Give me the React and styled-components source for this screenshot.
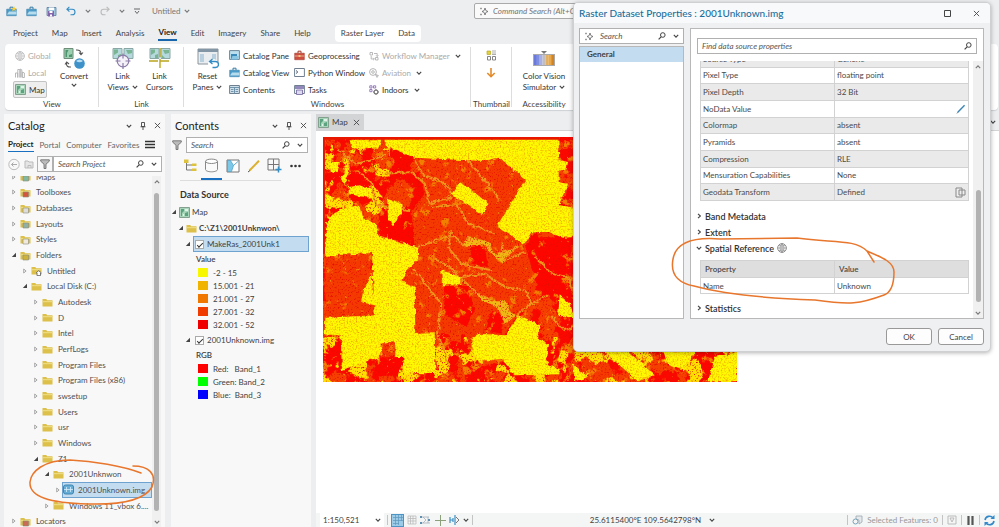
import React from "react";
import styled, { createGlobalStyle, css } from "styled-components";

const Global = createGlobalStyle`
  *, *::before, *::after { box-sizing: border-box; }
  body { margin: 0; background: #eceef0; }
  body, button, input, select, table {
    font-family: Lato, "Open Sans", sans-serif;
    font-size: 8px;
    color: #3f3f3f;
  }
  button, input, select { margin: 0; padding: 0; border: 0; background: none; }
  ul { list-style: none; margin: 0; padding: 0; }
  svg { display: block; flex: none; }
  h2, h3, p { margin: 0; font-weight: 400; }
`;

/* ---------- shell ---------- */
const Shell = styled.div`
  position: relative;
  display: flex;
  flex-direction: column;
  height: 100vh;
  overflow: hidden;
  background: #eceef0;
  white-space: nowrap;
`;
const TitleBar = styled.header`
  display: flex;
  align-items: center;
  height: 22px;
  padding-left: 6px;
`;
const QuickTools = styled.div`
  display: flex;
  align-items: center;
  gap: 9px;
  width: 146px;
`;
const IconButton = styled.button`
  display: flex;
  align-items: center;
  justify-content: center;
`;
const ProjectName = styled.button`
  display: flex;
  align-items: center;
  gap: 3px;
  width: 38px;
  color: #777;
`;
const CommandBox = styled.label`
  display: flex;
  align-items: center;
  gap: 5px;
  width: 190px;
  height: 16px;
  margin-left: 284px;
  padding: 0 4px;
  border: 1px solid #aaa;
  border-radius: 2px;
  background: #fafafa;
  input { flex: 1; min-width: 0; font-style: italic; }
`;
const TabBar = styled.nav`
  display: flex;
  align-items: center;
  gap: 14px;
  height: 22px;
  padding-left: 13px;
`;
const RibbonTab = styled.button`
  height: 16px;
  line-height: 12px;
  color: #444;
  ${(p) => p.$active && css`
    color: #222;
    font-weight: 700;
    border-bottom: 2px solid #1766ad;
  `}
`;
const ContextTabs = styled.div`
  display: flex;
  gap: 14px;
  height: 17px;
  padding: 0 6px;
  margin-left: 10px;
  border-radius: 4px;
  background: #fff;
`;
const Ribbon = styled.section`
  display: grid;
  grid-template-columns: 94px 85px 287px 41px 64px 1fr;
  height: 66px;
  margin: 0 1px 0 5px;
  border-radius: 4px;
  background: #fff;
  box-shadow: 0 1px 1px #cfd1d3;
`;
const RibbonGroup = styled.div`
  display: flex;
  flex-direction: column;
  justify-content: space-between;
  padding: 3px 0 0;
  ${(p) => p.$rule && css`
    background: linear-gradient(#ddd, #ddd) right 3px / 1px 60px no-repeat;
  `}
`;
const GroupBody = styled.div`
  display: flex;
  justify-content: ${(p) => p.$align || "flex-start"};
  gap: ${(p) => p.$gap || 0}px;
  padding-left: ${(p) => p.$pad || 0}px;
`;
const GroupName = styled.div`
  height: 12px;
  line-height: 12px;
  text-align: center;
`;
const Stack = styled.div`
  display: flex;
  flex-direction: column;
  width: ${(p) => p.$w}px;
`;
const SmallButton = styled.button`
  display: flex;
  align-items: center;
  gap: 3px;
  height: 17px;
  padding: 0 2px;
  text-align: left;
  color: ${(p) => (p.$off ? "#aaa" : "#333")};
  ${(p) => p.$on && css`
    outline: 1px solid #c3c3c3;
    outline-offset: -1px;
    border-radius: 2px;
    background: #eee;
  `}
`;
const BigButton = styled.button`
  display: flex;
  flex-direction: column;
  align-items: center;
  width: ${(p) => p.$w || 37}px;
  line-height: 11px;
  color: #333;
  svg { margin-bottom: 1px; }
  span { display: flex; align-items: center; gap: 3px; }
`;

/* ---------- docked panes ---------- */
const Workspace = styled.main`
  display: flex;
  flex: 1;
  min-height: 0;
  padding: 4px 0 0 4px;
  gap: 6px;
`;
const Pane = styled.section`
  display: flex;
  flex-direction: column;
  width: ${(p) => p.$w}px;
  min-height: 0;
  background: #f8f8f8;
  overflow: hidden;
`;
const PaneHead = styled.header`
  display: flex;
  align-items: center;
  gap: 8px;
  height: 23px;
  padding: 0 4px;
  h2 { flex: 1; font-size: 11px; color: #222; }
`;
const PaneTabs = styled.nav`
  display: flex;
  align-items: center;
  gap: 6px;
  height: 15px;
  padding: 0 4px;
`;
const PaneTab = styled.button`
  height: 15px;
  line-height: 12px;
  color: #666;
  ${(p) => p.$active && css`
    color: #222;
    font-weight: 700;
    border-bottom: 1px solid #1a70c0;
  `}
`;
const SearchRow = styled.div`
  display: flex;
  align-items: center;
  gap: ${(p) => p.$gap}px;
  padding: ${(p) => p.$pad};
`;
const SearchField = styled.label`
  display: flex;
  align-items: center;
  gap: 7px;
  flex: 1;
  min-width: 0;
  height: 16px;
  padding: 0 4px;
  border: 1px solid #b0b0b0;
  background: #fff;
  input { flex: 1; min-width: 0; width: 0; font-style: italic; outline: 0; }
  input::placeholder { color: #555; opacity: 1; }
`;
const FilterButton = styled.button`
  display: flex;
  align-items: center;
  justify-content: center;
  width: 16px;
  height: 16px;
  border: ${(p) => (p.$framed ? "1px solid #b0b0b0" : "0")};
`;
const TreeArea = styled.div`
  display: flex;
  flex: 1;
  min-height: 0;
  overflow: hidden;
`;
const Tree = styled.ul`
  display: grid;
  grid-auto-rows: 1fr;
  flex: 1;
  min-width: 0;
  height: calc(100% + 9px);
  margin-top: -7px;
`;
const TreeRow = styled.li`
  display: flex;
  align-items: center;
  gap: 1px;
  min-height: 0;
  padding-left: ${(p) => 7 + p.$depth * 11}px;
  color: #4f4f4f;
`;
const TreeLabel = styled.span`
  display: flex;
  align-items: center;
  gap: 5px;
  height: 16px;
  padding-left: 2px;
  ${(p) => p.$sel && css`
    flex: 1;
    gap: 4px;
    padding-left: 1px;
    outline: 1px solid #6ea3cf;
    outline-offset: -1px;
    background: #c3dcf0;
  `}
`;
const ScrollTrack = styled.div`
  display: flex;
  flex-direction: column;
  align-items: center;
  gap: 8px;
  width: ${(p) => p.$w}px;
  margin-right: ${(p) => p.$mr || 0}px;
  padding: 3px 0 2px;
  background: #f0f0f0;
`;
const ScrollThumb = styled.div`
  width: 5px;
  border-radius: 3px;
  background: #b2b2b2;
  ${(p) => (p.$len ? css`height: ${p.$len}px; margin-top: auto;` : css`flex: 1;`)}
`;
const ModeBar = styled.div`
  display: flex;
  margin: 0 30px 0 9px;
  border-bottom: 1px solid #ddd;
`;
const ModeButton = styled.button`
  display: flex;
  align-items: center;
  justify-content: center;
  flex: none;
  width: 21px;
  height: 27px;
  border-bottom: 2px solid ${(p) => (p.$active ? "#1a70c0" : "transparent")};
`;
const LayerTitle = styled.h3`
  padding: 7px 0 3px 9px;
  line-height: 13px;
  font-size: 9px;
  font-weight: 700;
  color: #333;
`;
const LayerRow = styled.div`
  display: flex;
  align-items: center;
  gap: 2px;
  height: 16px;
  margin-right: 2px;
  margin-top: ${(p) => (p.$spaced ? 1 : 0)}px;
  padding-left: ${(p) => p.$pad}px;
  font-weight: ${(p) => (p.$bold ? 700 : 400)};
`;
const LayerBox = styled.label`
  display: flex;
  align-items: center;
  gap: 3px;
  height: 16px;
  flex: 1;
  padding-left: 2px;
  ${(p) => p.$sel && css`
    outline: 1px solid #6ea3cf;
    outline-offset: -1px;
    background: #c3dcf0;
  `}
  input {
    appearance: none;
    width: 9px;
    height: 9px;
    border: 1px solid #aaa;
    background: #fff;
    display: grid;
    place-items: center;
  }
  input:checked::after {
    content: "";
    width: 6px;
    height: 3px;
    border: solid #333;
    border-width: 0 0 1px 1px;
    transform: rotate(-45deg);
  }
`;
const LegendTitle = styled.div`
  height: 14px;
  line-height: 14px;
  padding-left: 25px;
  font-weight: 600;
`;
const Legend = styled.ul`
  display: grid;
  grid-auto-rows: 13px;
  padding-left: 27px;
`;
const LegendItem = styled.li`
  display: flex;
  align-items: center;
  gap: 5px;
  white-space: pre;
  &::before {
    content: "";
    width: 10px;
    height: 9px;
    background: ${(p) => p.$color};
  }
`;

/* ---------- map ---------- */
const MapPane = styled.section`
  display: flex;
  flex-direction: column;
  flex: 1;
  min-width: 0;
  margin-left: -1px;
`;
const MapTabs = styled.div`
  display: flex;
  align-items: center;
  justify-content: space-between;
  height: 16px;
  padding-right: 3px;
`;
const MapTab = styled.button`
  display: flex;
  align-items: center;
  gap: 3px;
  height: 16px;
  padding: 0 4px 0 2px;
  background: #d2d4d6;
`;
const MapCanvas = styled.div`
  flex: 1;
  min-height: 0;
  padding: 6px 0 0 7px;
  border-top: 1px solid #d2d4d6;
  background: #fff;
  overflow: hidden;
`;
const StatusBar = styled.footer`
  display: flex;
  align-items: center;
  height: 14px;
  padding: 0 4px;
  background: #f4f5f5;
`;
const ScaleSelect = styled.select`
  appearance: none;
  width: 64px;
  height: 14px;
  padding-left: 3px;
  background: #fff;
`;
const StatusGroup = styled.div`
  display: flex;
  align-items: center;
  gap: ${(p) => p.$gap}px;
  margin-left: ${(p) => p.$ml || 0}px;
  color: ${(p) => (p.$dim ? "#999" : "#555")};
`;
const Coordinates = styled.div`
  display: flex;
  align-items: center;
  justify-content: flex-end;
  gap: 8px;
  flex: 1;
  padding-right: 132px;
  margin-right: auto;
`;
const ChevronOver = styled.span`
  margin-left: -9px;
  pointer-events: none;
`;
const Rule = styled.i`
  width: 1px;
  height: 10px;
  background: #c4c4c4;
`;
const Highlight = styled.button`
  display: grid;
  place-items: center;
  width: 13px;
  height: 13px;
  border: 1px solid #4c94c6;
  background: #9ccbe8;
`;

/* ---------- dialog ---------- */
const Dialog = styled.section`
  position: absolute;
  top: 2px;
  right: 8px;
  width: 418px;
  border: 1px solid #cfd0d1;
  border-radius: 5px;
  background: #eff0f2;
  box-shadow: 0 1px 4px rgba(0, 0, 0, 0.3);
  overflow: hidden;
`;
const DialogHead = styled.header`
  display: flex;
  align-items: center;
  gap: 22px;
  height: 20px;
  padding: 0 10px 0 5px;
  background: #f8f9fa;
  h2 { flex: 1; font-size: 10px; color: #176f9e; font-weight: 500; }
`;
const DialogBody = styled.div`
  display: grid;
  grid-template-columns: 105px 1fr;
  gap: 6px;
  height: 291px;
  margin: 5px 6px 0 5px;
`;
const Sidebar = styled.div`
  display: flex;
  flex-direction: column;
  gap: 2px;
`;
const DialogSearch = styled(SearchField)`
  flex: none;
`;
const PageList = styled.ul`
  flex: 1;
  border: 1px solid #b8b8b8;
  background: #fff;
`;
const PageItem = styled.li`
  height: 15px;
  line-height: 15px;
  padding-left: 7px;
  background: #c3dcf0;
  font-weight: 700;
`;
const Properties = styled.div`
  display: flex;
  flex-direction: column;
  min-width: 0;
  border: 1px solid #b8b8b8;
  background: #fff;
`;
const FindField = styled(SearchField)`
  flex: none;
  margin: 9px 6px 0;
`;
const PropertyScroll = styled.div`
  display: flex;
  justify-content: space-between;
  flex: 1;
  min-height: 0;
  margin-top: 7px;
  overflow: hidden;
`;
const PropertyList = styled.div`
  flex: 1;
  margin: -11px 4px 0 9px;
`;
const PropTable = styled.table`
  width: 100%;
  height: ${(p) => p.$h}px;
  margin-top: ${(p) => p.$mt || 0}px;
  border-collapse: collapse;
  table-layout: fixed;
  border: 1px solid #ccc;
  th, td {
    width: 50%;
    padding: 0 2px;
    border: 1px solid #d2d2d2;
    text-align: left;
    font-weight: 400;
    line-height: 10px;
    color: #4a4a4a;
  }
  thead th { height: 17px; padding: 0 4px; background: #dedede; font-weight: 600; }
  tr[data-shade="true"] > * { background: #eaeaea; }
`;
const Cell = styled.div`
  display: flex;
  align-items: center;
  justify-content: space-between;
  height: 12px;
`;
const Section = styled.button`
  display: flex;
  align-items: center;
  gap: 3px;
  height: 16px;
  margin-left: -4px;
  margin-top: ${(p) => p.$mt || 0}px;
  font-size: 9px;
  font-weight: 600;
  color: #333;
`;
const DialogFoot = styled.footer`
  display: flex;
  justify-content: flex-end;
  gap: 6px;
  padding: 9px 6px 6px;
`;
const DialogButton = styled.button`
  width: 46px;
  height: 17px;
  border: 1px solid #999;
  border-radius: 3px;
  background: #fdfdfd;
`;
const Ink = styled.svg`
  position: absolute;
  left: ${(p) => p.$x}px;
  top: ${(p) => p.$y}px;
  pointer-events: none;
  fill: none;
  stroke: #e8762c;
  stroke-linecap: round;
  stroke-linejoin: round;
`;

/* ---------- icons ---------- */
const Svg = ({ w = 10, h, box, children }) => (
  <svg width={w} height={h || w} viewBox={box || `0 0 ${w} ${h || w}`} fill="none" aria-hidden="true">
    {children}
  </svg>
);
const Chevron = ({ c = "#444", dir = "down", w = 6 }) => (
  <Svg w={w} box="0 0 6 6">
    <path
      d={{ down: "M.8 1.8 3 4.2 5.2 1.8", up: "M.8 4.2 3 1.8 5.2 4.2", right: "M2 .8 4.4 3 2 5.2" }[dir]}
      stroke={c}
      strokeWidth="1.1"
    />
  </Svg>
);
const Close = ({ w = 7, c = "#444" }) => (
  <Svg w={w} box="0 0 8 8"><path d="M1 1l6 6M7 1 1 7" stroke={c} strokeWidth="1" /></Svg>
);
const Pin = () => (
  <Svg w={6} h={8}><path d="M1.5.5h3v4h-3zM.5 4.8h5M3 5v3" stroke="#444" strokeWidth=".9" /></Svg>
);
const Lens = ({ w = 8 }) => (
  <Svg w={w} box="0 0 8 8"><circle cx="4.8" cy="3" r="2.3" stroke="#444" /><path d="M3.1 4.8.6 7.4" stroke="#444" strokeWidth="1.2" /></Svg>
);
const Spark = () => (
  <Svg w={9}><path d="M6 1l.9 2.6L9 4.5l-2.1.9L6 8l-.9-2.6L3 4.5l2.1-.9z" stroke="#666" strokeWidth=".8" /><path d="M1 1.5h2M2 .5v2M1 7.5h2M2 6.5v2" stroke="#888" strokeWidth=".7" /></Svg>
);
const Case = ({ star, red, w = 11 }) => (
  <Svg w={w} box="0 0 11 11">
    <path d="M4 3V1.2h3V3" stroke={red ? "#a33b2c" : "#3a7ba3"} />
    <path d="M.7 3.2h9.6v6.5H.7z" fill={red ? "#cf4d3d" : "#4b9cc9"} stroke={red ? "#a33b2c" : "#3a82ae"} strokeWidth=".6" />
    <path d={red ? "M.7 6h9.6" : "M1 8.5 3 5.5h7.5v3z"} fill="#b7dced" stroke={red ? "#f1c6b7" : "none"} strokeWidth=".8" />
    {red && <path d="M4.6 5h1.8v2H4.6z" fill="#f1d16b" />}
    {star && <path d="M8 0l.8 1.9 2 .1-1.5 1.2.5 2L8 4.1 6.2 5.2l.5-2L5.2 2l2-.1z" fill="#f3cf3f" />}
  </Svg>
);
const Save = () => (
  <Svg w={11}><path d="M1 1.5h9v8H1z" fill="#9ec5de" stroke="#5b7e9c" strokeWidth=".8" /><path d="M3 1.5h5V4H3z" fill="#fff" /><path d="M2 5h6v5.5H2z" fill="#8065ac" /><path d="M3.5 5h3v2h-3zM4 8.5h2v2H4z" fill="#fff" /></Svg>
);
const Undo = ({ c, flip }) => (
  <Svg w={10}>
    <g transform={flip ? "matrix(-1 0 0 1 10 0)" : undefined}>
      <path d="M1 3.2h5.2a2.6 2.6 0 010 5.6H4.5M3.4.8.9 3.2l2.5 2.5" stroke={c} strokeWidth="1.1" />
    </g>
  </Svg>
);
const MapIcon = ({ w = 11 }) => (
  <Svg w={w} box="0 0 11 11">
    <path d="M.5.5h10v10H.5z" fill="#a9d6bb" stroke="#84a08f" />
    <path d="M2 2h3v2L3 6v3H2zM6 6l3-1v4H6z" fill="#5ba37f" /><path d="M6 2h3v2H6zM4 7h1v2H4z" fill="#e2f2ea" />
  </Svg>
);
const Globe = ({ c = "#b5b5b5", w = 10 }) => (
  <Svg w={w} box="0 0 10 10"><circle cx="5" cy="5" r="4.4" stroke={c} fill="#f3f3f3" strokeWidth=".8" /><path d="M5 .6v8.8M.6 5h8.8M2 2.3Q5 4 8 2.3M2 7.7Q5 6 8 7.7M5 .6q-4 4.4 0 8.8M5 .6q4 4.4 0 8.8" stroke={c} strokeWidth=".5" /></Svg>
);
const City = () => (
  <Svg w={10}><path d="M.5 9.5V5h2.2v4.5M2.8 9.5v-8h2v8M5.3 9.5V1l1.5.8v7.7M7.4 9.5V4l2 1v4.5z" stroke="#b0b0b0" strokeWidth=".9" /></Svg>
);
const Convert = () => (
  <Svg w={22} h={23}>
    <path d="M1 1.5h9v10H1z" fill="#9ccfb0" stroke="#6f8d7b" /><path d="M2.5 3h3L4 6v4H2.5zM6 8l3-1v3H6z" fill="#4d9571" />
    <path d="M13 3q5-.5 5 4m-2-1.5 2 2.2 2-2.2M8 20q-5 .5-4.5-4M2 17.5 3.7 15l2.3 2" stroke="#555" strokeWidth="1.1" />
    <circle cx="16.5" cy="16.5" r="5.3" fill="#3f92c9" /><path d="M13 14q3.5-3 7 0-3.5 2.5-7 0z" fill="#b9def2" />
  </Svg>
);
const LinkIcon = ({ cursors }) => (
  <Svg w={22} h={23}>
    <path d="M1 1.5h9v10H1zM12 1.5h9v10h-9z" fill="#b5d9dd" stroke="#8aa7a5" />
    <path d="M2 2.5h4v3L2 8zM6 8l3-1v4H6zM14 3h6v3l-4 1zM13 8l3 3h-3z" fill="#79b592" />
    {cursors ? (
      <path d="M0 14h22M11 1v21" stroke="#bba51e" strokeWidth="1.4" strokeDasharray="9 2" />
    ) : (
      <g><circle cx="11" cy="14" r="5.8" stroke="#8a7ba8" strokeWidth="1.2" fill="#f4f1f8" /><path d="M11 6.5v5M11 16v6M3.5 14h5M13.5 14h5" stroke="#8a7ba8" strokeWidth="1.2" /></g>
    )}
  </Svg>
);
const ResetIcon = () => (
  <Svg w={22} h={23}>
    <path d="M1 2h20v15H1z" fill="#e9edf0" stroke="#8a949c" /><path d="M1 2h20v3H1z" fill="#8296a5" />
    <path d="M3 7h4v8H3zM15 7h4v8h-4z" fill="#b8cfdf" /><circle cx="16" cy="17" r="5" fill="#fff" />
    <path d="M13.5 14.5h5a3 3 0 010 6h-3M15.5 12l-3 2.5 3 2.5" stroke="#318bc4" strokeWidth="1.3" />
  </Svg>
);
const WindowIcon = ({ kind }) => (
  <Svg w={11}>
    <path d="M.6 1.5h9.8v8H.6z" fill={kind === "panel" ? "#cfe1ec" : "#fff"} stroke="#6f7f90" />
    {kind === "panel" && <path d="M1 3.5h9M5.5 3.5v6M2 5.5h2.5M2 7.5h2.5M6.5 5.5H9M6.5 7.5H9" stroke="#688ca5" strokeWidth=".9" />}
    {kind === "term" && <path d="M2 3.5 3.8 5 2 6.5" stroke="#4c5d70" />}
    {kind === "task" && <g><path d="M1 2h9v3H1z" fill="#9288bb" /><path d="M2.5 6h6v4.5h-6z" fill="#ded9ee" stroke="#6d639c" strokeWidth=".8" /></g>}
  </Svg>
);
const CatalogPaneIcon = () => (
  <Svg w={11}><path d="M.6.6h9.8v8.8H.6z" fill="#bcdff0" stroke="#6c8798" /><path d="M2 4h6v5.5H2z" fill="#3989bb" /><path d="M3.5 6H10L8.5 9.5H2z" fill="#8bc6e3" /></Svg>
);
const Flow = ({ c = "#aaa" }) => (
  <Svg w={10}><path d="M1 1.5h2.5V4H1zM6.5 6.5H9V9H6.5zM5 2.5h3.2v3M2.2 5v3h3M7 4.3l1.2 1.2 1.2-1.2M4.2 6.8 5.4 8 4.2 9.2" stroke={c} strokeWidth=".8" /></Svg>
);
const Plane = () => (
  <Svg w={10}><circle cx="4" cy="4" r="3.4" stroke="#b5b5b5" /><circle cx="4" cy="4" r="1.3" stroke="#b5b5b5" /><path d="M6 6l3.5 1.5L8 9.5z" fill="#ccc" stroke="#aaa" strokeWidth=".6" /></Svg>
);
const Indoors = () => (
  <Svg w={10}><path d="M.8.8H3V3H.8zM4.500.8h2.200V3H4.500zM.8 4.500H3v2.200H.8z" stroke="#8c73b3" strokeWidth=".9" /><circle cx="7" cy="7" r="1.900" stroke="#777" strokeWidth="1.200" /><path d="M7 4v1M7 9v1M4 7h1M9 7h1" stroke="#777" /></Svg>
);
const Thumbs = () => (
  <Svg w={11}><path d="M1 1h3.5v3.5H1z" fill="#e2d23f" stroke="#b9a823" strokeWidth=".7" /><path d="M6 1h4M6 3h4M6 4.5h4" stroke="#999" strokeWidth=".8" /><path d="M1.5 6.5h3V10h-3zM6.5 6.5h3V10h-3z" stroke="#777" strokeWidth=".9" /></Svg>
);
const ArrowDown = () => (
  <Svg w={10} h={11}><path d="M5 1v8.5M1.3 6 5 9.7 8.7 6" stroke="#e38b2b" strokeWidth="1.6" /></Svg>
);
const ColorBars = () => (
  <Svg w={22} h={23}>
    <path d="M8 4h6l-3 3z" fill="#777" />
    <rect x=".5" y="7.5" width="21" height="11" stroke="#aaa" fill="#fff" />
    {["#6979dc", "#7f8fe0", "#a5b1e5", "#c3bdbb", "#e2b064", "#eaa84c", "#d28324"].map((c, i) => (
      <rect key={c} x={1 + i * 2.86} y="8" width="2.9" height="10" fill={c} />
    ))}
  </Svg>
);
const Funnel = ({ w = 10 }) => (
  <Svg w={w} box="0 0 10 10"><path d="M.7.8h8.6v1.4L6 5.2v4.3H4V5.2L.7 2.2z" fill="#bbb" stroke="#666" strokeWidth=".8" /></Svg>
);
const Twist = ({ open }) => (
  <Svg w={6}>
    {open ? <path d="M5 .8V5H.8z" fill="#444" /> : <path d="M1.7 1v4l2.4-2z" stroke="#888" strokeWidth=".7" />}
  </Svg>
);
const Folder = ({ badge }) => (
  <Svg w={11} h={11}>
    <path d="M.5 2h3.7l1 1.2h5.3v6.3H.5z" fill="#dcc04a" /><path d="M.5 4.2h10v1H.5z" fill="#f1e08a" />
    {badge && badge !== "home" && <path d="M3 5h5.5v5H3z" fill={badge} stroke="#8a8a7a" strokeWidth=".6" />}
    {badge === "home" && <path d="M5 8l2.7-2.3L10.4 8M6 8v2.6h3.5V8" fill="#fff" stroke="#666" strokeWidth=".9" />}
  </Svg>
);
const RasterIcon = () => (
  <Svg w={11}><rect x=".5" y="1" width="10" height="9" rx="2" fill="#67aed6" stroke="#3e86b0" /><path d="M3.5 3v5M7.5 3v5M1 5.5h9" stroke="#d7eefa" strokeWidth=".8" /></Svg>
);
const Lines = () => (
  <Svg w={10} h={9}><path d="M0 1.5h10M0 4.5h10M0 7.5h10" stroke="#333" strokeWidth="1.5" /></Svg>
);
const ListIcon = () => (
  <Svg w={15}><path d="M1 1.5h4.5V5H1zM9 5.5h4.5V8H9zM9 10.5h4.5V13H9z" fill="#ddc23e" /><path d="M3.5 5v7H9M3.5 7H9" stroke="#777" /></Svg>
);
const Cylinder = () => (
  <Svg w={15}><path d="M1.5 3.3v8.2c0 1.3 2.7 2.3 6 2.3s6-1 6-2.3V3.3" fill="#fafafa" stroke="#888" /><ellipse cx="7.5" cy="3.3" rx="6" ry="2.2" fill="#fff" stroke="#888" /></Svg>
);
const SelectIcon = () => (
  <Svg w={14}><path d="M1 1h12v12H1z" fill="#fff" stroke="#777" /><path d="M1.5 1.5h3l3 5-2 6h-4z" fill="#7cc8e8" stroke="#4d9cc0" strokeWidth=".7" /><path d="M7.500 6.500 12.500 2" stroke="#4d9cc0" strokeWidth=".9" /></Svg>
);
const Pencil = ({ w = 14, c = "#dbb02f" }) => (
  <Svg w={w} box="0 0 14 14"><path d="M2.5 11.5 12 1.8" stroke={c} strokeWidth="2" /><path d="M1 13l2-1.5" stroke="#555" /></Svg>
);
const GridPlus = () => (
  <Svg w={15}><path d="M1 1h11v11H1zM6.5 1v11M1 6.5h11" stroke="#777" /><path d="M11.5 8.5v6M8.5 11.5h6" stroke="#348fc5" strokeWidth="1.5" /></Svg>
);
const Dots = () => (
  <Svg w={11} h={4}><circle cx="1.5" cy="2" r="1.3" fill="#333" /><circle cx="5.5" cy="2" r="1.3" fill="#333" /><circle cx="9.5" cy="2" r="1.3" fill="#333" /></Svg>
);

/* ---------- classified raster ---------- */
const tint = (r, g, b, k, c) => `0 0 0 0 ${r} 0 0 0 0 ${g} 0 0 0 0 ${b} ${k} 0 0 0 ${c}`;
const Noise = ({ id, freq, oct = 3, seed, type = "fractalNoise", matrix }) => (
  <filter id={id} x="0" y="0" width="100%" height="100%" colorInterpolationFilters="sRGB">
    <feTurbulence type={type} baseFrequency={freq} numOctaves={oct} seed={seed} />
    <feColorMatrix type="matrix" values={matrix} />
    <feComposite in2="SourceGraphic" operator="in" />
  </filter>
);
const FIELDS = [
  "M200 25 720 20 725 90 750 95 745 118 722 125 722 155 750 160 722 225 768 232V320L735 322 690 305 640 305 620 340 535 290 622 147 540 82 500 92 290 82 200 45z",
  "M24 280 50 248 100 225 128 230 135 262 180 285 180 315 300 352 300 390 265 420 250 450 290 470 292 608 350 606 352 728 258 728 256 680 232 680 232 636 188 636 186 680 110 705 72 720 68 615 20 612 22 562 170 555 162 368 22 376z",
  "M425 155 515 220 490 252 400 192z",
  "M208 205 250 218 252 250 225 285 210 265z",
  "M92 170 125 165 162 180 155 202 92 192z",
  "M370 420 430 440 430 465 372 465z",
  "M600 555 665 585 660 625 690 640 682 700 725 720 720 732 590 735 555 690 480 690 460 640 480 610 565 615z",
  "M725 495 755 520 768 560 720 560z",
  "M160 430 170 525 130 515 135 480z",
  "M30 95 65 95 60 125 35 120z",
  "M85 105 95 130 80 160 68 150z",
  "M95 30 190 30 180 55 100 50z",
  "M20 190 50 200 28 225z",
  "M860 663 930 663 1010 735 960 753 900 700z",
  "M1040 663 1130 663 1100 720 1050 700z",
  "M1190 680 1257 665V753H1170z",
  "M765 700 810 740 770 753z",
];
const EMBERS = [
  "M290 82 540 82 622 147 535 290 620 340 650 370 640 420 655 480 600 550 560 610 292 612 290 470 250 450 265 420 300 390 290 330 270 260 320 190z",
  "M22 376 162 368 130 515 170 525 170 555 22 562z",
  "M188 636 232 636 232 682 188 682z",
  "M440 610 520 600 500 660 460 680z",
  "M780 663 860 670 900 753 800 753z",
];
const DEEP = [
  "M82 108 180 120 165 180 90 165z",
  "M378 467 450 467 470 540 445 590 378 550z",
  "M640 320 760 322 765 500 700 500 650 450 625 350z",
  "M20 615 68 615 72 700 20 750z",
  "M170 682 256 680 256 730 170 740z",
  "M380 640 430 640 430 680 385 690z",
  "M180 225 280 240 290 350 185 310z",
  "M1130 663 1190 663 1200 720 1120 740z",
  "M520 540 560 560 550 610 500 600z",
  "M450 330 500 350 510 410 460 400z",
];
const VEINS = [
  "M60 55 110 100 160 90 210 70",
  "M120 120 160 160 175 225 280 240",
  "M200 130 280 125 320 160 335 220 400 200",
  "M340 230 420 225 450 280 530 310",
  "M300 350 360 325 410 320 440 350 450 320 510 335 530 375 600 350",
  "M285 415 330 470 370 520 360 610 390 700",
  "M350 385 400 415 430 445 480 490 520 510 545 540 590 560 640 520 690 495",
  "M550 340 560 390 620 365",
  "M440 30 450 90 500 150 545 210",
  "M650 380 700 430 750 440 765 480",
  "M700 560 740 600 768 590",
  "M290 90 310 130 380 160 400 190",
  "M430 440 500 430 560 470 620 480 650 530",
  "M400 300 390 350 430 400 520 420",
];
const Raster = () => (
  <svg width="414" height="245" viewBox="15 20 1242 735" role="img" aria-label="Classified raster layer">
    <defs>
      <filter id="ragged" x="-2%" y="-2%" width="104%" height="104%" colorInterpolationFilters="sRGB">
        <feTurbulence type="fractalNoise" baseFrequency=".06" numOctaves="3" seed="8" />
        <feDisplacementMap in="SourceGraphic" scale="14" xChannelSelector="R" yChannelSelector="G" />
      </filter>
      <Noise id="patch" freq=".018" oct={5} seed={4} matrix={tint(0.96, 0.25, 0, 22, -10.6)} />
      <Noise id="amber" freq=".03" oct={5} seed={21} matrix={tint(0.95, 0.5, 0, 9, -5.6)} />
      <Noise id="vein" freq=".012" oct={4} seed={13} type="turbulence" matrix={tint(0.93, 0.52, 0.04, -26, 1.9)} />
      <Noise id="grain" freq=".2" oct={2} seed={2} matrix={tint(0.9, 0.05, 0, 4, -2.2)} />
      <Noise id="gold" freq=".22" oct={2} seed={31} matrix={tint(0.93, 0.62, 0, 2.4, -1.1)} />
      <Noise id="sun" freq=".02" oct={6} seed={17} matrix={tint(1, 0.88, 0, 16, -8.9)} />
    </defs>
    <path d="M15 20h1242v735H15z" fill="#fb0800" />
    <path d="M15 20h1242v735H15z" fill="#000" filter="url(#patch)" />
    <g filter="url(#ragged)">
      <path d={EMBERS.join("")} fill="#f43a00" />
      <path d={DEEP.join("")} fill="#fd0600" />
    </g>
    <path d="M15 20h1242v735H15z" fill="#000" filter="url(#amber)" />
    <path d="M15 20h1242v735H15z" fill="#000" filter="url(#vein)" />
    <path d="M15 620h1242v135H15zM15 20h200v250H15z" fill="#000" filter="url(#sun)" />
    <g filter="url(#ragged)">
      <path d={VEINS.join("")} stroke="#ee951c" strokeWidth="6" fill="none" />
      <path d="M440 350 450 320 510 335 530 375 600 350 550 395 520 370 500 345zM475 490 520 510 560 510 590 560 560 580 540 530 490 510z" fill="#f0b814" />
    </g>
    <path d="M15 20h1242v735H15z" fill="#000" filter="url(#grain)" />
    <path d={FIELDS.join("")} fill="#fffa00" filter="url(#ragged)" />
    <path d={FIELDS.join("")} fill="#000" filter="url(#gold)" />
    <path d="M15 20h710v8H15zM15 20h6v350h-6z" fill="#e81800" />
  </svg>
);

/* ---------- data ---------- */
const TREE = [
  [0, "Maps", false, "#7fb8a0"], [0, "Toolboxes", false, "#d4553f"], [0, "Databases", false, "#ddd"],
  [0, "Layouts", false, "#8fb1a5"], [0, "Styles", false, "#f0e9e0"], [0, "Folders", true, "#cdb23c"],
  [1, "Untitled", false, "home"], [1, "Local Disk (C:)", true], [2, "Autodesk"], [2, "D"], [2, "Intel"],
  [2, "PerfLogs"], [2, "Program Files"], [2, "Program Files (x86)"], [2, "swsetup"], [2, "Users"],
  [2, "usr"], [2, "Windows"], [2, "Z1", true], [3, "2001Unknwon", true], [4, "2001Unknown.img", false, "raster"],
  [3, "Windows 11_vbox 6...."], [0, "Locators", false, "#c96b55"],
];
const CLASSES = [["#f7f700", "-2 - 15"], ["#f0b400", "15.001 - 21"], ["#f07800", "21.001 - 27"], ["#f03c00", "27.001 - 32"], ["#f00000", "32.001 - 52"]];
const BANDS = [["#ff0000", "Red:   Band_1"], ["#00ff00", "Green: Band_2"], ["#0000ff", "Blue:  Band_3"]];
const PROPS = [
  ["Source Type", "Generic"], ["Pixel Type", "floating point"], ["Pixel Depth", "32 Bit"], ["NoData Value", ""],
  ["Colormap", "absent"], ["Pyramids", "absent"], ["Compression", "RLE"], ["Mensuration Capabilities", "None"],
  ["Geodata Transform", "Defined"],
];

const PaneTools = () => (
  <>
    <IconButton aria-label="Options"><Chevron /></IconButton>
    <IconButton aria-label="Auto hide"><Pin /></IconButton>
    <IconButton aria-label="Close"><Close /></IconButton>
  </>
);

function RibbonBar() {
  return (
    <Ribbon>
      <RibbonGroup $rule>
        <GroupBody $pad={8} $gap={7}>
          <Stack $w={34}>
            <SmallButton $off><Globe />Global</SmallButton>
            <SmallButton $off><City />Local</SmallButton>
            <SmallButton $on><MapIcon />Map</SmallButton>
          </Stack>
          <BigButton $w={40}><Convert />Convert<Chevron /></BigButton>
        </GroupBody>
        <GroupName>View</GroupName>
      </RibbonGroup>
      <RibbonGroup $rule>
        <GroupBody $pad={5}>
          <BigButton><LinkIcon />Link<span>Views <Chevron /></span></BigButton>
          <BigButton><LinkIcon cursors />Link<span>Cursors</span></BigButton>
        </GroupBody>
        <GroupName>Link</GroupName>
      </RibbonGroup>
      <RibbonGroup $rule>
        <GroupBody $pad={4}>
          <BigButton $w={39}><ResetIcon />Reset<span>Panes <Chevron /></span></BigButton>
          <Stack $w={65}>
            <SmallButton><CatalogPaneIcon />Catalog Pane</SmallButton>
            <SmallButton><Case />Catalog View</SmallButton>
            <SmallButton><WindowIcon kind="panel" />Contents</SmallButton>
          </Stack>
          <Stack $w={75}>
            <SmallButton><Case red />Geoprocessing</SmallButton>
            <SmallButton><WindowIcon kind="term" />Python Window</SmallButton>
            <SmallButton><WindowIcon kind="task" />Tasks</SmallButton>
          </Stack>
          <Stack $w={96}>
            <SmallButton $off><Flow />Workflow Manager&nbsp; <Chevron /></SmallButton>
            <SmallButton $off><Plane />Aviation&nbsp; <Chevron /></SmallButton>
            <SmallButton><Indoors />Indoors&nbsp; <Chevron /></SmallButton>
          </Stack>
        </GroupBody>
        <GroupName>Windows</GroupName>
      </RibbonGroup>
      <RibbonGroup $rule>
        <GroupBody $align="center">
          <Stack $w={15}>
            <SmallButton aria-label="Update thumbnail"><Thumbs /></SmallButton>
            <SmallButton aria-label="Import thumbnail"><ArrowDown /></SmallButton>
          </Stack>
        </GroupBody>
        <GroupName>Thumbnail</GroupName>
      </RibbonGroup>
      <RibbonGroup>
        <GroupBody $align="center">
          <BigButton $w={60}><ColorBars />Color Vision<span>Simulator <Chevron /></span></BigButton>
        </GroupBody>
        <GroupName>Accessibility</GroupName>
      </RibbonGroup>
    </Ribbon>
  );
}

function CatalogPane() {
  return (
    <Pane $w={161}>
      <PaneHead><h2>Catalog</h2><PaneTools /></PaneHead>
      <PaneTabs>
        <PaneTab $active>Project</PaneTab><PaneTab>Portal</PaneTab><PaneTab>Computer</PaneTab><PaneTab>Favorites</PaneTab>
        <IconButton aria-label="Menu"><Lines /></IconButton>
      </PaneTabs>
      <SearchRow $gap={0} $pad="4px 3px 4px 4px">
        <IconButton aria-label="Back">
          <Svg w={13}><circle cx="6" cy="6.5" r="5.2" stroke="#bbb" /><path d="M9 6.5H3.5M5.5 4.5l-2 2 2 2" stroke="#aaa" /></Svg>
        </IconButton>
        <FilterButton aria-label="Up"><Svg w={10}><path d="M1 9V2h3l1 1h4v6zM4 9V6.5h3V9" stroke="#bbb" fill="#e5e5e5" /></Svg></FilterButton>
        <FilterButton $framed aria-label="Filter"><Funnel /></FilterButton>
        <SearchField><input placeholder="Search Project" aria-label="Search Project" /><Lens /><Chevron /></SearchField>
      </SearchRow>
      <TreeArea>
        <Tree>
          {TREE.map(([depth, name, open, badge]) => (
            <TreeRow key={name} $depth={depth}>
              <Twist open={open} />
              <TreeLabel $sel={badge === "raster"}>
                {badge === "raster" ? <RasterIcon /> : <Folder badge={badge} />}
                {name}
              </TreeLabel>
            </TreeRow>
          ))}
        </Tree>
        <ScrollTrack $w={9} $mr={4}><Chevron dir="up" c="#777" /><ScrollThumb /><Chevron c="#777" /></ScrollTrack>
      </TreeArea>
    </Pane>
  );
}

function ContentsPane() {
  return (
    <Pane $w={140}>
      <PaneHead><h2>Contents</h2><PaneTools /></PaneHead>
      <SearchRow $gap={4} $pad="0 3px 0 1px">
        <IconButton aria-label="Filter"><Funnel /></IconButton>
        <SearchField><input placeholder="Search" aria-label="Search contents" /><Lens /><Chevron /></SearchField>
      </SearchRow>
      <ModeBar>
        <ModeButton aria-label="Drawing order"><ListIcon /></ModeButton>
        <ModeButton $active aria-label="Data source"><Cylinder /></ModeButton>
        <ModeButton aria-label="Selection"><SelectIcon /></ModeButton>
        <ModeButton aria-label="Editing"><Pencil /></ModeButton>
        <ModeButton aria-label="Snapping"><GridPlus /></ModeButton>
        <ModeButton aria-label="More"><Dots /></ModeButton>
      </ModeBar>
      <LayerTitle>Data Source</LayerTitle>
      <LayerRow $pad={0}><Twist open /><MapIcon />Map</LayerRow>
      <LayerRow $pad={7} $bold><Twist open /><Folder />C:\Z1\2001Unknwon\</LayerRow>
      <LayerRow $pad={14}><Twist open /><LayerBox $sel><input type="checkbox" defaultChecked />MakeRas_2001Unk1</LayerBox></LayerRow>
      <LegendTitle>Value</LegendTitle>
      <Legend>{CLASSES.map(([c, t]) => <LegendItem key={t} $color={c}>{t}</LegendItem>)}</Legend>
      <LayerRow $pad={14} $spaced><Twist open /><LayerBox><input type="checkbox" defaultChecked />2001Unknown.img</LayerBox></LayerRow>
      <LegendTitle>RGB</LegendTitle>
      <Legend>{BANDS.map(([c, t]) => <LegendItem key={t} $color={c}>{t}</LegendItem>)}</Legend>
    </Pane>
  );
}

function MapView() {
  return (
    <MapPane>
      <MapTabs>
        <MapTab><MapIcon />Map&nbsp;<Close /></MapTab>
        <IconButton aria-label="View list"><Chevron /></IconButton>
      </MapTabs>
      <MapCanvas><Raster /></MapCanvas>
      <StatusBar>
        <ScaleSelect aria-label="Map scale" defaultValue="s"><option value="s">1:150,521</option></ScaleSelect>
        <ChevronOver><Chevron /></ChevronOver>
        <StatusGroup $gap={3} $ml={6}>
          <Rule />
          <Highlight aria-label="Grid"><Svg w={10}><path d="M2.5 0v10M5.5 0v10M8.5 0v6M0 2.5h10M0 5.5h10M0 8.5h6" stroke="#5d97bd" strokeWidth=".7" /></Svg></Highlight>
          <Svg w={10}><path d="M1 1h8v8H1zM3.5 1v8M6 1v8M1 3.5h8M1 6h8" stroke="#bbb" strokeWidth=".8" /></Svg>
          <Svg w={12} h={10}><path d="M1 2h8M2 8h8M3 2l3 3-3 3M8 2v6" stroke="#a3b0ba" strokeWidth=".8" /><path d="M0 1h2v2H0zM8 4h2v2H8zM0 7h2v2H0z" fill="#5f91b4" /></Svg>
          <Svg w={11}><path d="M5.5 0v11M0 5.5h11" stroke="#8ba07b" /></Svg>
          <Svg w={11} h={10}><path d="M1 2v6M4 3v4M1 5h3M6 0v10" stroke="#3b91c5" strokeWidth="1.2" /><path d="M7 2l3 3-3 3" stroke="#777" /></Svg>
          <Chevron />
          <Rule />
        </StatusGroup>
        <Coordinates>25.6115400°E 109.5642798°N<Chevron /></Coordinates>
        <StatusGroup $gap={4} $dim>
          <Rule />
          <Svg w={11}><path d="M4 1h6v6L7 9V5L4 4z" stroke="#9aa7b0" fill="#e5e9eb" strokeWidth=".8" /><circle cx="3.5" cy="6.5" r="2.5" stroke="#79a2b8" /></Svg>
          Selected Features: 0
          <Rule />
          <Svg w={10}><path d="M1 1h8v8H1zM3 3h4L5 7z" stroke="#bbb" /></Svg>
          <Rule />
          <Svg w={9}><path d="M2.5 0v9M6.5 0v9" stroke="#555" strokeWidth="2.2" /></Svg>
          <Rule />
          <Svg w={11}><path d="M1 5a4.5 4.5 0 018-2M10 6a4.5 4.5 0 01-8 2" stroke="#3189c9" strokeWidth="1.6" /><path d="M10.5 0v4h-4zM.5 11V7h4z" fill="#3189c9" /></Svg>
        </StatusGroup>
      </StatusBar>
    </MapPane>
  );
}

function PropertiesDialog() {
  return (
    <Dialog role="dialog" aria-label="Raster Dataset Properties">
      <DialogHead>
        <h2>Raster Dataset Properties : 2001Unknown.img</h2>
        <IconButton aria-label="Maximize"><Svg w={7}><path d="M.5.5h6v6h-6z" stroke="#444" /></Svg></IconButton>
        <IconButton aria-label="Close"><Close /></IconButton>
      </DialogHead>
      <DialogBody>
        <Sidebar>
          <DialogSearch><Spark /><input placeholder="Search" aria-label="Search pages" /><Lens /><Chevron /></DialogSearch>
          <PageList><PageItem>General</PageItem></PageList>
        </Sidebar>
        <Properties>
          <FindField><input placeholder="Find data source properties" aria-label="Find data source properties" /><Lens /></FindField>
          <PropertyScroll>
            <PropertyList>
              <PropTable $h={151}>
                <tbody>
                  {PROPS.map(([k, v], i) => (
                    <tr key={k} data-shade={i % 2 === 0}>
                      <th scope="row">{k}</th>
                      <td>
                        <Cell>
                          {v || <span />}
                          {k === "NoData Value" && <IconButton aria-label="Edit"><Pencil w={10} c="#3c86b5" /></IconButton>}
                          {k === "Geodata Transform" && (
                            <IconButton aria-label="Details"><Svg w={11}><path d="M1 1h6v9H1zM4 3h6v5H4z" fill="#eee" stroke="#888" /></Svg></IconButton>
                          )}
                        </Cell>
                      </td>
                    </tr>
                  ))}
                </tbody>
              </PropTable>
              <Section $mt={7}><Chevron dir="right" />Band Metadata</Section>
              <Section><Chevron dir="right" />Extent</Section>
              <Section><Chevron />Spatial Reference<Globe c="#777" /></Section>
              <PropTable $h={34} $mt={4}>
                <thead><tr><th scope="col">Property</th><th scope="col">Value</th></tr></thead>
                <tbody><tr><th scope="row">Name</th><td>Unknown</td></tr></tbody>
              </PropTable>
              <Section $mt={6}><Chevron dir="right" />Statistics</Section>
            </PropertyList>
            <ScrollTrack $w={10}><Chevron dir="up" c="#777" /><ScrollThumb $len={112} /><Chevron c="#777" /></ScrollTrack>
          </PropertyScroll>
        </Properties>
      </DialogBody>
      <DialogFoot><DialogButton>OK</DialogButton><DialogButton>Cancel</DialogButton></DialogFoot>
    </Dialog>
  );
}

export default function App() {
  return (
    <>
      <Global />
      <Shell>
        <TitleBar>
          <QuickTools>
            <IconButton aria-label="New project"><Case star /></IconButton>
            <IconButton aria-label="Open project"><Case /></IconButton>
            <IconButton aria-label="Save project"><Save /></IconButton>
            <IconButton aria-label="Undo"><Undo c="#318bc4" /></IconButton>
            <Chevron c="#777" />
            <IconButton aria-label="Redo"><Undo c="#bbb" flip /></IconButton>
            <Chevron c="#777" />
            <IconButton aria-label="Customize toolbar"><Svg w={6} h={7}><path d="M0 1h6M1 3l2 2.5L5 3" stroke="#666" /></Svg></IconButton>
          </QuickTools>
          <ProjectName>Untitled<Chevron c="#777" /></ProjectName>
          <CommandBox><Spark /><input placeholder="Command Search (Alt+Q)" aria-label="Command Search" /></CommandBox>
        </TitleBar>
        <TabBar>
          {["Project", "Map", "Insert", "Analysis", "View", "Edit", "Imagery", "Share", "Help"].map((t) => (
            <RibbonTab key={t} $active={t === "View"}>{t}</RibbonTab>
          ))}
          <ContextTabs><RibbonTab>Raster Layer</RibbonTab><RibbonTab>Data</RibbonTab></ContextTabs>
        </TabBar>
        <RibbonBar />
        <Workspace>
          <CatalogPane />
          <ContentsPane />
          <MapView />
        </Workspace>
        <PropertiesDialog />
        <Ink $x={28} $y={458} width="128" height="48" strokeWidth="1.5">
          <path d="M113 15C95 8 65 3 42 2 15 2 3 14 2 24 1 39 22 45 60 46 95 47 117 41 124 29 129 16 121 8 105 8" />
        </Ink>
        <Ink $x={670} $y={232} width="226" height="74" strokeWidth="1.5">
          <path d="M204 30 197 19C185 7 163 11 127 6L50 7C25 5 6 10 3 27 0 43 8 51 24 54 50 61 85 66 145 68 180 73 190 72 214 63 222 60 224 50 224 40 224 28 205 23 197 19" />
        </Ink>
      </Shell>
    </>
  );
}
